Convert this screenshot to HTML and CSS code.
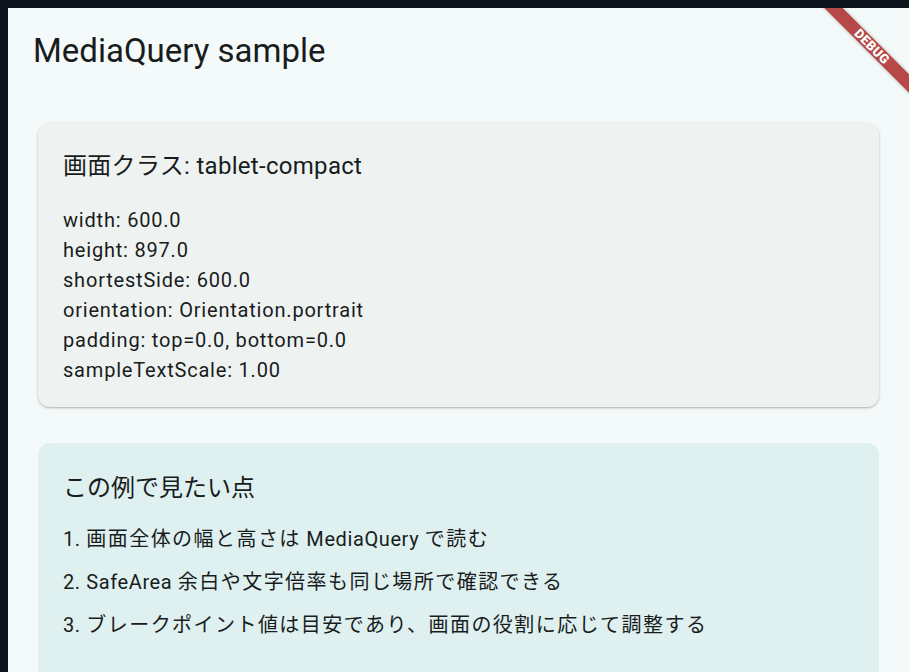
FILE: index.html
```html
<!DOCTYPE html>
<html lang="ja">
<head>
<meta charset="UTF-8">
<title>MediaQuery sample</title>
<link rel="stylesheet" href="styles.css">
</head>
<body>
<div id="frame">
  <div id="app">
    <div class="appbar">MediaQuery sample</div>
    <div class="content">
      <div class="card info">
        <h2>画面クラス: tablet-compact</h2>
        <div class="lines">
          <div>width: 600.0</div>
          <div>height: 897.0</div>
          <div>shortestSide: 600.0</div>
          <div>orientation: Orientation.portrait</div>
          <div>padding: top=0.0, bottom=0.0</div>
          <div>sampleTextScale: 1.00</div>
        </div>
      </div>
      <div class="card notes">
        <h2>この例で見たい点</h2>
        <ol>
          <li>1. <span class="ja">画面全体の幅と高さは</span> MediaQuery <span class="ja">で読む</span></li>
          <li>2. SafeArea <span class="ja">余白や文字倍率も同じ場所で確認できる</span></li>
          <li>3. <span class="ja">ブレークポイント値は目安であり、画面の役割に応じて調整する</span></li>
        </ol>
      </div>
    </div>
    <div class="debug">DEBUG</div>
  </div>
</div>
</body>
</html>
```
FILE: styles.css
```css
html, body{margin:0; padding:0; height:100%;}
body{background:#0d141c; overflow:hidden; font-family:Roboto, "Noto Sans CJK JP", sans-serif; color:#191c1c;}

#frame{padding:8px 0 0 8px; height:100%; box-sizing:border-box;}
#app{position:relative; background:#f4faf9; height:100%; overflow:hidden;}

.appbar{font-size:33px; line-height:40px; padding:23px 0 0 25px; height:64px; box-sizing:border-box;}

.content{padding:51px 30px 0 30px; display:flex; flex-direction:column; gap:36px;}

.card{border-radius:12px; padding:24px 24px 22px 25px;}
.card h2{margin:0; font-size:24px; font-weight:400; line-height:38px; letter-spacing:0.3px;}
.info{background:#eef3f2; box-shadow:0 1px 3px rgba(0,0,0,0.22), 0 1px 1px rgba(0,0,0,0.08);}
.notes{background:#dff0f0; padding-top:25px; padding-bottom:40px;}

.lines{margin-top:20px; font-size:20px; line-height:30px; letter-spacing:0.8px;}

.notes h2{line-height:40px; letter-spacing:0;}
.notes ol{list-style:none; margin:16px 0 0 0; padding:0; display:flex; flex-direction:column; gap:13px;}
.notes li{font-size:20px; line-height:30px; letter-spacing:0.6px;}
.notes li .ja{letter-spacing:1.45px;}

.debug{position:absolute; top:32px; right:-33px; width:140px; height:13px; line-height:13px; text-align:center;
  background:rgba(170,40,40,0.85); color:#fff; font-size:13px; font-weight:900; letter-spacing:0.4px;
  transform:rotate(45deg); transform-origin:center; box-shadow:0 0 4px rgba(0,0,0,0.25);}
```
